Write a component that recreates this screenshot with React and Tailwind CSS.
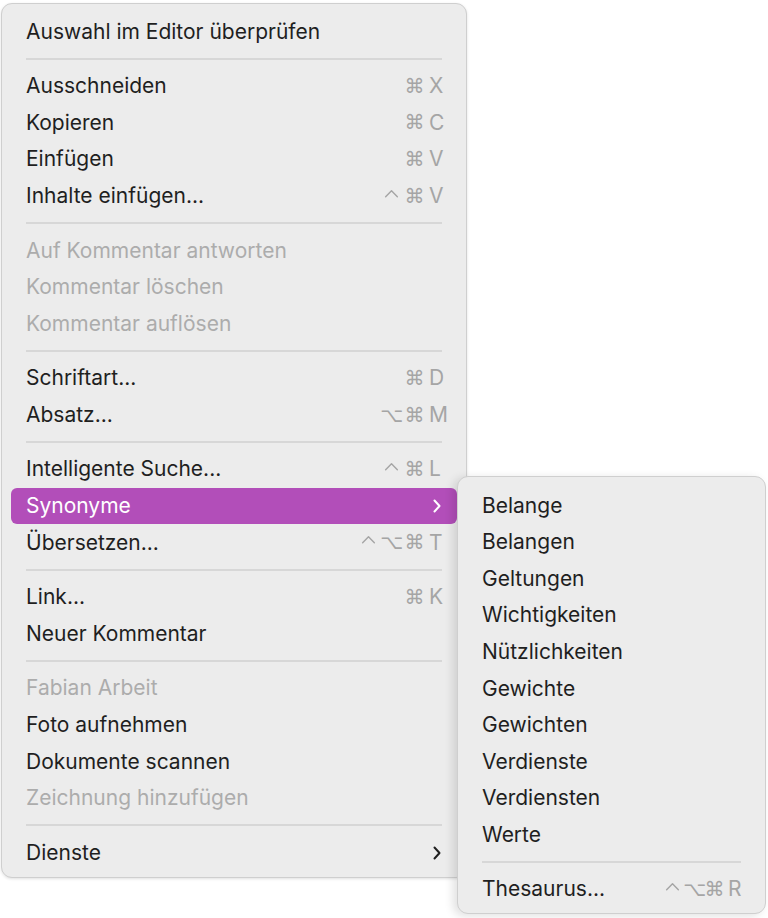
import React from "react";

const FONT = { fontFamily: "Inter, 'Noto Sans', 'DejaVu Sans', sans-serif" };

const mainItems = [
  { label: "Auswahl im Editor überprüfen" },
  { sep: true },
  { label: "Ausschneiden", mods: "⌘", key: "X" },
  { label: "Kopieren", mods: "⌘", key: "C" },
  { label: "Einfügen", mods: "⌘", key: "V" },
  { label: "Inhalte einfügen...", mods: "^⌘", key: "V" },
  { sep: true },
  { label: "Auf Kommentar antworten", disabled: true },
  { label: "Kommentar löschen", disabled: true },
  { label: "Kommentar auflösen", disabled: true },
  { sep: true },
  { label: "Schriftart...", mods: "⌘", key: "D" },
  { label: "Absatz...", mods: "⌥⌘", key: "M" },
  { sep: true },
  { label: "Intelligente Suche...", mods: "^⌘", key: "L" },
  { label: "Synonyme", submenu: true, active: true },
  { label: "Übersetzen...", mods: "^⌥⌘", key: "T" },
  { sep: true },
  { label: "Link...", mods: "⌘", key: "K" },
  { label: "Neuer Kommentar" },
  { sep: true },
  { label: "Fabian Arbeit", disabled: true },
  { label: "Foto aufnehmen" },
  { label: "Dokumente scannen" },
  { label: "Zeichnung hinzufügen", disabled: true },
  { sep: true },
  { label: "Dienste", submenu: true },
];

const synonyms = [
  "Belange",
  "Belangen",
  "Geltungen",
  "Wichtigkeiten",
  "Nützlichkeiten",
  "Gewichte",
  "Gewichten",
  "Verdienste",
  "Verdiensten",
  "Werte",
];

function Chevron({ className }) {
  return (
    <svg viewBox="0 0 10 16" className={className} fill="none">
      <path d="M2.5 2.5 L7.5 8 L2.5 13.5" stroke="currentColor" strokeWidth="2" strokeLinecap="round" strokeLinejoin="round" />
    </svg>
  );
}

// one modifier glyph, drawn at a fixed cell width like the macOS menu column
function Mod({ ch, tight }) {
  const cell = tight ? "w-[21px]" : "w-[23px]";
  if (ch === "^") {
    return (
      <span className={`${cell} flex justify-center`}>
        <svg viewBox="0 0 16 10" className="w-[15px] h-[9px] -mt-[5px]" fill="none">
          <path d="M1.5 8.5 L8 2 L14.5 8.5" stroke="currentColor" strokeWidth="1.6" strokeLinecap="round" strokeLinejoin="round" />
        </svg>
      </span>
    );
  }
  return (
    <span className={`${cell} text-center text-[20px]`} style={{ fontFamily: "'DejaVu Sans', sans-serif" }}>
      {ch}
    </span>
  );
}

function Shortcut({ mods, k, tight }) {
  return (
    <span className="flex items-center text-[#a5a5a5]">
      {mods.split("").map((m, i) => (
        <Mod key={i} ch={m} tight={tight} />
      ))}
      <span className="w-[14px] ml-[3px] text-left">{k}</span>
    </span>
  );
}

function Row({ item }) {
  const base = "h-[36.6px] mx-[9px] pl-[15px] pr-[14px] rounded-[6px] flex items-center justify-between text-[21px]";
  const color = item.active ? "bg-[#b24eb9] text-white" : item.disabled ? "text-[#acacac]" : "text-[#1f1f1f]";
  return (
    <div className={`${base} ${color}`}>
      <span>{item.label}</span>
      {item.mods && <Shortcut mods={item.mods} k={item.key} />}
      {item.submenu && <Chevron className={`w-[10px] h-[16px] mr-[1px] ${item.active ? "text-white" : "text-[#1f1f1f]"}`} />}
    </div>
  );
}

function Separator() {
  return (
    <div className="h-[18px] flex items-center px-[24px]">
      <div className="h-[2px] w-full bg-[#d7d7d7]" />
    </div>
  );
}

export default function App() {
  return (
    <div className="relative w-[768px] h-[918px] bg-white" style={FONT}>
      <div className="absolute left-[1px] top-[3px] w-[466px] h-[875px] rounded-[11px] bg-[#ececec] border border-[#cfcfcf] shadow-[0_1px_3px_rgba(0,0,0,0.12)] pt-[9px]">
        {mainItems.map((item, i) => (item.sep ? <Separator key={i} /> : <Row key={i} item={item} />))}
      </div>

      <div className="absolute left-[457px] top-[476px] w-[309px] h-[438px] rounded-[11px] bg-[#ececec] border border-[#cfcfcf] shadow-[-4px_2px_10px_rgba(0,0,0,0.12)] pt-[10px]">
        {synonyms.map((s) => (
          <div key={s} className="h-[36.6px] mx-[9px] px-[15px] flex items-center text-[21px] text-[#1f1f1f]">
            {s}
          </div>
        ))}
        <div className="h-[18px] flex items-center px-[24px]">
          <div className="h-[2px] w-full bg-[#d7d7d7]" />
        </div>
        <div className="h-[36.6px] mx-[9px] pl-[15px] pr-[14px] flex items-center justify-between text-[21px] text-[#1f1f1f]">
          <span>Thesaurus...</span>
          <Shortcut mods="^⌥⌘" k="R" tight />
        </div>
      </div>
    </div>
  );
}
